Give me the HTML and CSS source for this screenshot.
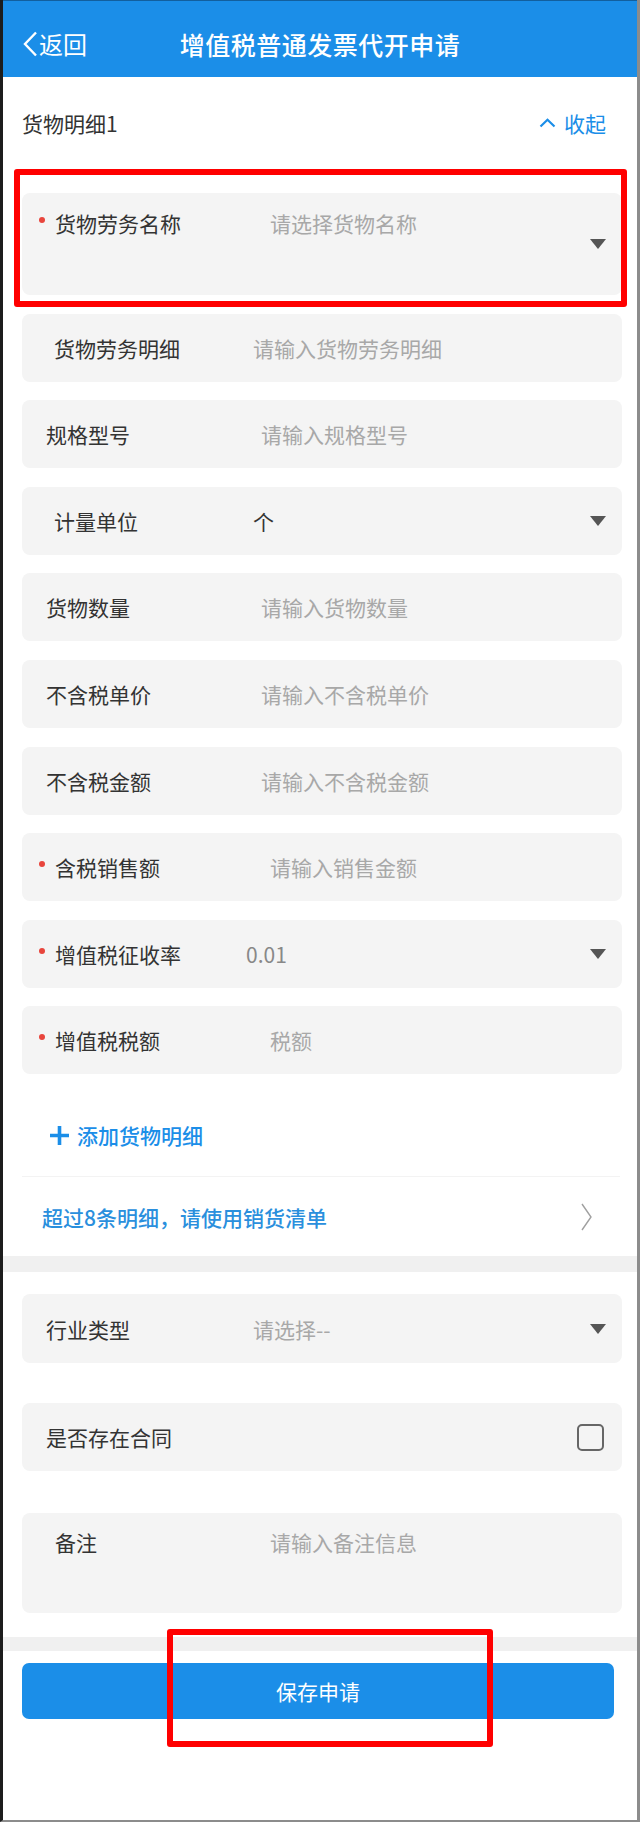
FILE: index.html
```html
<!DOCTYPE html>
<html lang="zh-CN">
<head>
    <meta charset="UTF-8">
    <meta name="viewport" content="width=device-width, initial-scale=1.0">
    <title>增值税普通发票代开申请</title>
    <link rel="stylesheet" href="styles.css">
</head>
<body>
    <div class="phone">
        <header class="topbar">
            <a class="back" href="#">
                <svg width="16" height="26" viewBox="0 0 16 26"><path d="M14 1.5 L3 13 L14 24.5" fill="none" stroke="#fff" stroke-width="2.4"/></svg>
                <span>返回</span>
            </a>
            <h1>增值税普通发票代开申请</h1>
            <span></span>
        </header>

        <section class="goods">
            <div class="goods-head">
                <span>货物明细1</span>
                <a class="fold" href="#">
                    <svg width="17" height="10" viewBox="0 0 17 10"><path d="M1.5 8.5 L8.5 1.8 L15.5 8.5" fill="none" stroke="#1b8ee8" stroke-width="2.2"/></svg>
                    收起
                </a>
            </div>

            <div class="fields">
                <div class="field field-tall req">
                    <i class="dot"></i>
                    <label>货物劳务名称</label>
                    <span class="ph">请选择货物名称</span>
                    <span class="caret"></span>
                </div>
                <div class="field field-in8">
                    <label class="lbl-sm">货物劳务明细</label>
                    <span class="ph">请输入货物劳务明细</span>
                </div>
                <div class="field">
                    <label>规格型号</label>
                    <span class="ph">请输入规格型号</span>
                </div>
                <div class="field field-in8">
                    <label class="lbl-sm">计量单位</label>
                    <span class="val">个</span>
                    <span class="caret"></span>
                </div>
                <div class="field">
                    <label>货物数量</label>
                    <span class="ph">请输入货物数量</span>
                </div>
                <div class="field">
                    <label>不含税单价</label>
                    <span class="ph">请输入不含税单价</span>
                </div>
                <div class="field">
                    <label>不含税金额</label>
                    <span class="ph">请输入不含税金额</span>
                </div>
                <div class="field req">
                    <i class="dot"></i>
                    <label>含税销售额</label>
                    <span class="ph">请输入销售金额</span>
                </div>
                <div class="field req">
                    <i class="dot"></i>
                    <label class="lbl-xs">增值税征收率</label>
                    <span class="val val-grey">0.01</span>
                    <span class="caret"></span>
                </div>
                <div class="field req">
                    <i class="dot"></i>
                    <label>增值税税额</label>
                    <span class="ph">税额</span>
                </div>
            </div>

            <a class="add-goods" href="#">
                <svg width="19" height="19" viewBox="0 0 19 19"><path d="M9.5 0 V19 M0 9.5 H19" stroke="#1b8ee8" stroke-width="3.6"/></svg>
                添加货物明细
            </a>

            <a class="list-link" href="#">
                <span>超过8条明细，请使用销货清单</span>
                <svg width="11" height="28" viewBox="0 0 11 28"><path d="M1 1 L10 14 L1 27" fill="none" stroke="#a0a0a0" stroke-width="1.4"/></svg>
            </a>
        </section>

        <div class="band"></div>

        <section class="extra">
            <div class="field field-industry">
                <label class="lbl-md">行业类型</label>
                <span class="ph">请选择--</span>
                <span class="caret"></span>
            </div>
            <div class="field field-contract">
                <label>是否存在合同</label>
                <span class="checkbox"></span>
            </div>
            <div class="field field-note">
                <label>备注</label>
                <span class="ph">请输入备注信息</span>
            </div>
        </section>

        <div class="band band-thin"></div>

        <button class="save" type="button">保存申请</button>

        <div class="mark mark-name"></div>
        <div class="mark mark-save"></div>
    </div>
</body>
</html>
```

FILE: styles.css
```css
body {
    margin: 0;
    font-family: "Noto Sans CJK SC", "Noto Sans", sans-serif;
    background: #fff;
}
a {
    text-decoration: none;
    color: inherit;
}
.phone {
    position: relative;
    width: 640px;
    height: 1822px;
    box-sizing: border-box;
    border-left: 3px solid #1c1c1c;
    border-right: 3px solid #8c8c8c;
    border-bottom: 2px solid #8c8c8c;
    background: #fff;
    overflow: hidden;
}

/* top bar */
.topbar {
    height: 77px;
    box-sizing: border-box;
    padding-top: 10px;
    background: #1b8ee8;
    color: #fff;
    display: grid;
    grid-template-columns: 1fr auto 1fr;
    align-items: center;
    border-top: 1px solid #125f9e;
}
.back {
    display: flex;
    align-items: center;
    gap: 1px;
    padding-left: 19px;
    font-size: 24px;
    line-height: 30px;
    color: #fff;
}
.topbar h1 {
    margin: 0;
    font-size: 25px;
    font-weight: 500;
    letter-spacing: 0.5px;
    line-height: 30px;
}

/* goods block */
.goods-head {
    height: 92px;
    display: flex;
    align-items: center;
    justify-content: space-between;
    padding: 0 31px 0 19px;
    font-size: 21px;
    color: #333;
}
.fold {
    display: flex;
    align-items: center;
    gap: 8px;
    color: #1b8ee8;
}
.fields {
    margin-top: 24px;
    padding: 0 15px 0 19px;
    display: flex;
    flex-direction: column;
    gap: 18.6px;
}
.field {
    height: 68px;
    box-sizing: border-box;
    display: flex;
    align-items: center;
    padding: 0 16px 0 24px;
    background: #f4f4f4;
    border-radius: 8px;
    font-size: 21px;
    line-height: 24px;
}
.field label {
    width: 215px;
    flex-shrink: 0;
    color: #333;
}
.field .lbl-md { width: 207px; }
.field .lbl-sm { width: 199px; }
.field .lbl-xs { width: 191px; }
.field-in8 {
    padding-left: 32px;
}
.field.req {
    padding-left: 17px;
}
.dot {
    width: 6px;
    height: 6px;
    border-radius: 50%;
    background: #e8453c;
    margin-right: 10px;
    margin-bottom: 6px;
    flex-shrink: 0;
}
.ph {
    color: #a8a8a8;
}
.val {
    color: #333;
}
.val-grey {
    color: #888;
}
.caret {
    margin-left: auto;
    width: 0;
    height: 0;
    border-left: 8.5px solid transparent;
    border-right: 8.5px solid transparent;
    border-top: 10px solid #555;
}
.field-tall {
    height: 102px;
    align-items: flex-start;
    padding-top: 18px;
}
.field-tall .dot {
    margin-top: 6px;
    margin-bottom: 0;
}
.field-tall .caret {
    align-self: center;
    margin-top: -18px;
}

.add-goods {
    height: 102px;
    box-sizing: border-box;
    padding: 20px 0 0 47px;
    display: flex;
    align-items: center;
    gap: 8px;
    font-size: 21px;
    font-weight: 500;
    color: #1b8ee8;
}
.list-link {
    height: 80px;
    box-sizing: border-box;
    margin: 0 17px 0 19px;
    padding: 0 28px 0 20px;
    border-top: 1px solid #f3f3f3;
    display: flex;
    align-items: center;
    justify-content: space-between;
    font-size: 21px;
    font-weight: 500;
    color: #2a8fdd;
}

.band {
    height: 16px;
    background: #f0f0f0;
}
.band-thin {
    height: 14px;
    margin-top: 24px;
}

/* extra block */
.extra {
    padding: 22px 15px 0 19px;
}
.field-industry {
    height: 69px;
    margin-bottom: 40px;
}
.field-contract {
    margin-bottom: 42px;
    padding-right: 18px;
}
.checkbox {
    margin-left: auto;
    width: 27px;
    height: 27px;
    box-sizing: border-box;
    border: 2.5px solid #666;
    border-radius: 5px;
}
.field-note {
    height: 100px;
    align-items: flex-start;
    padding-top: 17px;
    padding-left: 33px;
}
.field-note label {
    width: 215px;
}

.save {
    display: block;
    width: 592px;
    height: 56px;
    margin: 12px 0 0 19px;
    border: none;
    border-radius: 7px;
    background: #1b8ee8;
    color: #fff;
    font-family: inherit;
    font-size: 21px;
    cursor: pointer;
}

/* red annotation frames */
.mark {
    position: absolute;
    box-sizing: border-box;
    border: 6px solid #ff0000;
    border-radius: 3px;
}
.mark-name {
    left: 11px;
    top: 169px;
    width: 613px;
    height: 138px;
}
.mark-save {
    left: 164px;
    top: 1629px;
    width: 326px;
    height: 118px;
}
```
